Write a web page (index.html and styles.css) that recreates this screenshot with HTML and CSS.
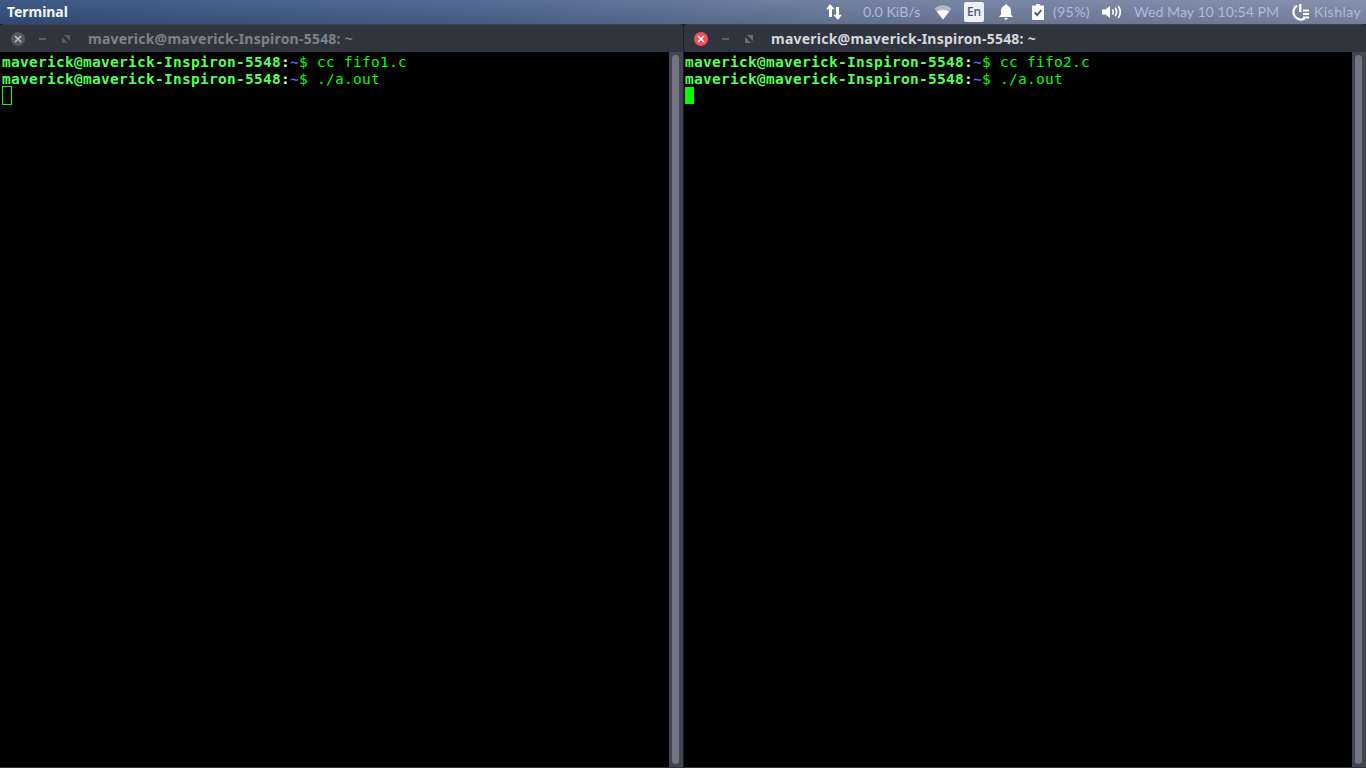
FILE: index.html
```html
<!DOCTYPE html>
<html lang="en">
<head>
<meta charset="utf-8">
<title>Terminal</title>
<link rel="stylesheet" href="styles.css">
</head>
<body>
<header class="panel">
  <div class="app-name">Terminal</div>
  <div class="indicators">
    <svg class="ic ic-net" width="18" height="18" viewBox="0 0 18 18"><path d="M5 1 L9.8 6.2 H7 V14 H4 V6.2 H1.2 Z M13 17 L8.2 11.8 H11 V4 H14 V11.8 H16.8 Z" fill="#fff"/></svg>
    <span class="txt speed">0.0 KiB/s</span>
    <svg class="ic ic-wifi" width="18" height="15" viewBox="0 0 18 15"><path d="M0.5 3.8 C5 -0.8 13 -0.8 17.5 3.8 L9 14.5 Z" fill="#fff" opacity=".45"/><path d="M3 6.8 C6.5 3.9 11.5 3.9 15 6.8 L9 14.5 Z" fill="#fff"/></svg>
    <span class="lang">En</span>
    <svg class="ic ic-bell" width="16" height="16" viewBox="0 0 16 16"><path d="M8 0.5 C9 0.5 9.4 1 9.5 1.8 C12 2.5 13 4.5 13 7 V10.5 L15 13 H1 L3 10.5 V7 C3 4.5 4 2.5 6.5 1.8 C6.6 1 7 0.5 8 0.5 Z M6.3 14 H9.7 C9.6 15 9 15.6 8 15.6 C7 15.6 6.4 15 6.3 14 Z" fill="#fff"/></svg>
    <svg class="ic ic-batt" width="12" height="16" viewBox="0 0 12 16"><path d="M4 0 H8 V1.5 H11 Q12 1.5 12 2.5 V15 Q12 16 11 16 H1 Q0 16 0 15 V2.5 Q0 1.5 1 1.5 H4 Z" fill="#fff"/><path d="M2.8 8.5 L5.2 11 L9.4 6" fill="none" stroke="#4a5572" stroke-width="1.9"/></svg>
    <span class="txt pct">(95%)</span>
    <svg class="ic ic-vol" width="21" height="14" viewBox="0 0 21 14"><path d="M0 4.5 H3.5 L8 1 V13 L3.5 9.5 H0 Z" fill="#fff"/><path d="M10.5 4.5 Q12 7 10.5 9.5 M13.2 2.8 Q16 7 13.2 11.2 M16.2 1 Q20.4 7 16.2 13" fill="none" stroke="#fff" stroke-width="1.7"/></svg>
    <span class="txt clock">Wed May 10 10:54 PM</span>
    <svg class="ic ic-session" width="19" height="18" viewBox="0 0 19 18"><path d="M6 2.6 A7 7 0 1 0 14 15.4" fill="none" stroke="#fff" stroke-width="2.2"/><path d="M8 1 H10.4 V9 H8 Z M12 6.5 H18 V8.5 H12 Z M12 10 H18 V12 H12 Z M12 13.5 H18 V15.5 H12 Z" fill="#fff"/></svg>
    <span class="txt user">Kishlay</span>
  </div>
</header>
<main class="desktop">
  <section class="window window-left">
    <div class="titlebar">
      <span class="btn-close inactive"><svg width="8" height="8" viewBox="0 0 8 8"><path d="M1 1 L7 7 M7 1 L1 7" stroke="#c0c2c8" stroke-width="1.5"/></svg></span>
      <span class="btn-min"></span>
      <svg class="btn-max" width="8" height="8" viewBox="0 0 8 8"><path d="M8 0 V6 L2 0 Z M0 8 V2 L6 8 Z" fill="#5a5d65"/></svg>
      <span class="win-title dim">maverick@maverick-Inspiron-5548: ~</span>
    </div>
    <div class="body">
      <div class="term">
        <div class="line"><b class="pr">maverick@maverick-Inspiron-5548</b><b class="co">:</b><b class="ti">~</b><span>$ cc fifo1.c</span></div>
        <div class="line"><b class="pr">maverick@maverick-Inspiron-5548</b><b class="co">:</b><b class="ti">~</b><span>$ ./a.out</span></div>
        <div class="cursor hollow"></div>
      </div>
      <div class="scrollbar"><div class="thumb"></div></div>
    </div>
  </section>
  <section class="window window-right">
    <div class="titlebar">
      <span class="btn-close"><svg width="8" height="8" viewBox="0 0 8 8"><path d="M1 1 L7 7 M7 1 L1 7" stroke="#fff" stroke-width="1.5"/></svg></span>
      <span class="btn-min"></span>
      <svg class="btn-max" width="8" height="8" viewBox="0 0 8 8"><path d="M8 0 V6 L2 0 Z M0 8 V2 L6 8 Z" fill="#6a6d75"/></svg>
      <span class="win-title">maverick@maverick-Inspiron-5548: ~</span>
    </div>
    <div class="body">
      <div class="term">
        <div class="line"><b class="pr">maverick@maverick-Inspiron-5548</b><b class="co">:</b><b class="ti">~</b><span>$ cc fifo2.c</span></div>
        <div class="line"><b class="pr">maverick@maverick-Inspiron-5548</b><b class="co">:</b><b class="ti">~</b><span>$ ./a.out</span></div>
        <div class="cursor"></div>
      </div>
      <div class="scrollbar"><div class="thumb"></div></div>
    </div>
  </section>
</main>
</body>
</html>
```
FILE: styles.css
```css
* { box-sizing: border-box; }
html, body { margin: 0; padding: 0; height: 100%; overflow: hidden; background: #2c2f38; }
body { display: flex; flex-direction: column; width: 1366px; height: 768px; }

.panel {
  height: 24px; flex: none; display: flex; align-items: center; justify-content: space-between;
  background:
    linear-gradient(180deg, rgba(255,255,255,.05), rgba(0,0,0,.1)),
    linear-gradient(90deg, #34507f 0%, #4d648f 35%, #6b7a9e 60%, #808ca8 100%);
  font-family: "Lato", "Noto Sans", sans-serif;
}
.app-name { margin-left: 7px; color: #f4f6fa; font: 700 14px "Noto Sans", sans-serif; letter-spacing: -.05px; position: relative; top: -1px; }
.indicators { display: flex; align-items: center; height: 24px; }
.ic { flex: none; display: block; }
.txt { color: #aebbda; font-size: 14.2px; font-weight: 400; white-space: nowrap; position: relative; top: -1px; }
.ic-net { margin-right: 20px; }
.speed { width: 58px; margin-right: 13px; }
.ic-wifi { margin-right: 12px; }
.lang { width: 20px; height: 20px; background: #eef0f4; color: #4a5572; border-radius: 2px; font: 500 12px/20px "Noto Sans", sans-serif; text-align: center; margin-right: 14px; }
.ic-bell { margin-right: 18px; }
.ic-batt { margin-right: 9px; }
.pct { width: 38px; margin-right: 11px; letter-spacing: .3px; }
.ic-vol { margin-right: 11px; }
.clock { width: 144px; margin-right: 13px; }
.ic-session { margin-right: 4px; }
.user { width: 48px; margin-right: 4px; letter-spacing: .4px; }

.desktop { flex: 1; display: flex; gap: 1px; min-height: 0; background: #1c1e24; }
.window { display: flex; flex-direction: column; min-width: 0; border-bottom: 1px solid #30343e; }
.window-left { flex: 0 0 683px; }
.window-right { flex: 1 1 0; }
.titlebar {
  height: 28px; flex: none; display: flex; align-items: center; padding-left: 11px;
  background: #30343e; border-top: 1px solid #3c404a; border-radius: 4px 4px 0 0;
}
.window-right .titlebar { padding-left: 10px; }
.btn-close { width: 14px; height: 14px; border-radius: 50%; background: #ec5257; display: flex; align-items: center; justify-content: center; flex: none; }
.btn-close.inactive { background: #55585f; }
.btn-min { width: 7px; height: 2px; background: #5a5d65; margin-left: 14px; flex: none; }
.btn-max { margin-left: 16px; flex: none; }
.win-title { margin-left: 18px; color: #d6d8dc; font: 700 14px "Noto Sans", sans-serif; letter-spacing: .23px; white-space: nowrap; }
.win-title.dim { color: #7f828a; }

.body { flex: 1; display: flex; min-height: 0; background: #000; }
.term { flex: 1; padding: 2px 0 0 2px; font: 14.5px/17px "DejaVu Sans Mono", monospace; color: #00ff00; min-width: 0; }
.window-right .term { padding-left: 1px; }
.line { height: 17px; white-space: pre; letter-spacing: .27px; }
.line b { font-weight: 700; }
.pr { color: #55ff55; }
.co { color: #d8ffd8; }
.ti { color: #5c5cff; }
.cursor { width: 9px; height: 17px; margin-top: -1px; background: #00ff00; }
.cursor.hollow { width: 10px; height: 19px; margin-top: -2px; background: none; border: 1px solid #00ff00; }
.scrollbar { width: 14px; flex: none; background: #42454f; padding: 3px 4px 3px 3px; }
.thumb { height: 100%; background: #737682; border-radius: 4px; }
```
